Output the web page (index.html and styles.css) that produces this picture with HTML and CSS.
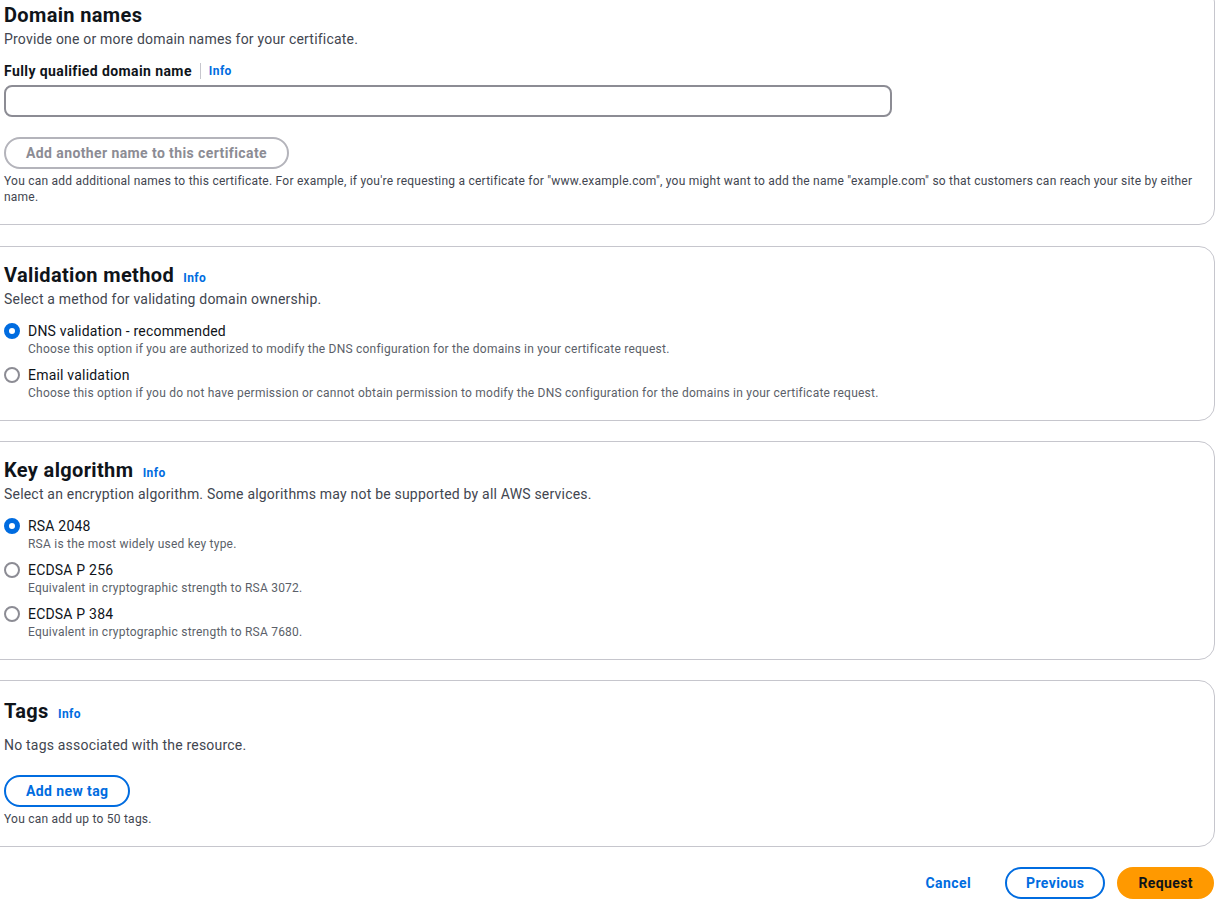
FILE: index.html
```html
<!DOCTYPE html>
<html lang="en">
<head>
    <meta charset="UTF-8">
    <title>Request certificate</title>
    <link rel="stylesheet" href="styles.css">
</head>
<body>
    <div class="page">
        <!-- Domain names -->
        <section class="card card-stack card-domains">
            <h2 class="card-title">Domain names</h2>
            <p class="card-desc">Provide one or more domain names for your certificate.</p>
            <div class="field">
                <label class="field-label">Fully qualified domain name <span class="divider"></span><a class="info" href="#">Info</a></label>
                <input class="text-input" type="text">
            </div>
            <button class="btn btn-disabled" disabled>Add another name to this certificate</button>
            <p class="hint">You can add additional names to this certificate. For example, if you're requesting a certificate for "www.example.com", you might want to add the name "example.com" so that customers can reach your site by either name.</p>
        </section>

        <!-- Validation method -->
        <section class="card">
            <h2 class="card-title">Validation method <a class="info" href="#">Info</a></h2>
            <p class="card-desc">Select a method for validating domain ownership.</p>
            <div class="radio-group">
                <label class="radio">
                    <span class="radio-dot checked"></span>
                    <span class="radio-text">
                        <span class="radio-label">DNS validation - recommended</span>
                        <span class="radio-desc">Choose this option if you are authorized to modify the DNS configuration for the domains in your certificate request.</span>
                    </span>
                </label>
                <label class="radio">
                    <span class="radio-dot"></span>
                    <span class="radio-text">
                        <span class="radio-label">Email validation</span>
                        <span class="radio-desc">Choose this option if you do not have permission or cannot obtain permission to modify the DNS configuration for the domains in your certificate request.</span>
                    </span>
                </label>
            </div>
        </section>

        <!-- Key algorithm -->
        <section class="card">
            <h2 class="card-title">Key algorithm <a class="info" href="#">Info</a></h2>
            <p class="card-desc">Select an encryption algorithm. Some algorithms may not be supported by all AWS services.</p>
            <div class="radio-group">
                <label class="radio">
                    <span class="radio-dot checked"></span>
                    <span class="radio-text">
                        <span class="radio-label">RSA 2048</span>
                        <span class="radio-desc">RSA is the most widely used key type.</span>
                    </span>
                </label>
                <label class="radio">
                    <span class="radio-dot"></span>
                    <span class="radio-text">
                        <span class="radio-label">ECDSA P 256</span>
                        <span class="radio-desc">Equivalent in cryptographic strength to RSA 3072.</span>
                    </span>
                </label>
                <label class="radio">
                    <span class="radio-dot"></span>
                    <span class="radio-text">
                        <span class="radio-label">ECDSA P 384</span>
                        <span class="radio-desc">Equivalent in cryptographic strength to RSA 7680.</span>
                    </span>
                </label>
            </div>
        </section>

        <!-- Tags -->
        <section class="card card-stack card-tags">
            <h2 class="card-title">Tags <a class="info" href="#">Info</a></h2>
            <p class="card-desc tags-empty">No tags associated with the resource.</p>
            <button class="btn btn-normal">Add new tag</button>
            <p class="hint">You can add up to 50 tags.</p>
        </section>

        <div class="actions">
            <a class="link-btn" href="#">Cancel</a>
            <button class="btn btn-normal">Previous</button>
            <button class="btn btn-primary">Request</button>
        </div>
    </div>
</body>
</html>
```

FILE: styles.css
```css
* {
    margin: 0;
    padding: 0;
    box-sizing: border-box;
}

body {
    font-family: Roboto, 'Liberation Sans', sans-serif;
    background-color: #ffffff;
    color: #0f141a;
    font-size: 14px;
    line-height: 20px;
    letter-spacing: 0.2px;
}

.page {
    margin: -14px 10px 0 -17px;
    display: flex;
    flex-direction: column;
    gap: 20px;
}

.card {
    border: 1px solid #c6c6cd;
    border-radius: 16px;
    padding: 16px 20px 19px 20px;
}

.card-stack {
    display: flex;
    flex-direction: column;
}

.card-domains {
    margin-bottom: 1px;
}

.card-title {
    font-size: 20px;
    line-height: 24px;
    font-weight: 700;
    letter-spacing: 0.35px;
}

.card-desc {
    margin-top: 2px;
    color: #424650;
}

.info {
    color: #006ce0;
    font-size: 12px;
    line-height: 16px;
    font-weight: 700;
    letter-spacing: 0.4px;
    text-decoration: none;
}

.card-title .info {
    margin-left: 4px;
}

/* Form field */
.field {
    margin-top: 12px;
}

.field-label {
    display: flex;
    align-items: center;
    font-weight: 700;
    letter-spacing: 0.4px;
    line-height: 20px;
}

.divider {
    display: inline-block;
    width: 1px;
    height: 16px;
    background-color: #c6c6cd;
    margin: 0 8px;
}

.text-input {
    display: block;
    margin-top: 4px;
    width: 888px;
    height: 32px;
    border: 2px solid #8c8c94;
    border-radius: 8px;
    font: inherit;
    padding: 0 10px;
}

/* Buttons */
.btn {
    font-family: inherit;
    font-size: 14px;
    font-weight: 700;
    line-height: 20px;
    letter-spacing: 0.4px;
    height: 32px;
    padding: 0 20px;
    border-radius: 20px;
    background: #ffffff;
    cursor: pointer;
}

.card .btn {
    align-self: flex-start;
    margin-top: 20px;
}

.btn-disabled {
    border: 2px solid #b4b4bb;
    color: #8c8c94;
    cursor: default;
}

.btn-normal {
    border: 2px solid #006ce0;
    color: #006ce0;
}

.btn-primary {
    border: 2px solid #ff9900;
    background-color: #ff9900;
    color: #0f141a;
}

.hint {
    font-size: 12px;
    line-height: 16px;
    letter-spacing: 0.23px;
    color: #424650;
    margin-top: 4px;
}

/* Radios */
.radio-group {
    margin-top: 12px;
    display: flex;
    flex-direction: column;
    gap: 8px;
}

.radio {
    display: flex;
    gap: 8px;
}

.radio-dot {
    flex: none;
    width: 16px;
    height: 16px;
    margin-top: 2px;
    border: 2px solid #8c8c94;
    border-radius: 50%;
}

.radio-dot.checked {
    border: 5px solid #006ce0;
}

.radio-text {
    display: flex;
    flex-direction: column;
}

.radio-label {
    line-height: 20px;
}

.radio-desc {
    font-size: 12px;
    line-height: 16px;
    letter-spacing: 0.23px;
    color: #5b5f69;
}

/* Tags */
.card-tags {
    padding-top: 18px;
}

.tags-empty {
    margin-top: 12px;
}

/* Footer actions */
.actions {
    display: flex;
    justify-content: flex-end;
    align-items: center;
    gap: 12px;
    margin: 0 1px 0 0;
}

.actions .btn {
    padding: 0 19px;
}

.link-btn {
    color: #006ce0;
    font-weight: 700;
    letter-spacing: 0.4px;
    text-decoration: none;
    margin-right: 22px;
}
```
